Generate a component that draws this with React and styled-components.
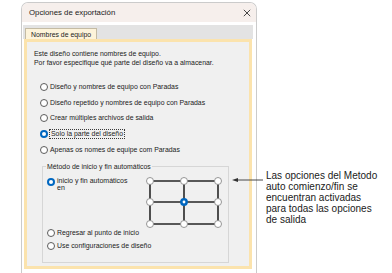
import React from "react";
import styled, { createGlobalStyle } from "styled-components";

const Global = createGlobalStyle`
  html, body { margin: 0; padding: 0; background: #ffffff; }
  body { font-family: "Liberation Sans", Arial, sans-serif; color: #1b1b1b; }
  * { box-sizing: border-box; }
`;

const Page = styled.div`
  position: relative;
  width: 392px;
  height: 273px;
  overflow: hidden;
  padding: 2px 0 0 21px;
`;

const Dialog = styled.div`
  width: 236px;
  height: 271px;
  border: 1px solid #cbcbcb;
  border-bottom: none;
  border-radius: 7px 7px 0 0;
  background: #ffffff;
  display: flex;
  flex-direction: column;
`;

const TitleBar = styled.div`
  height: 19px;
  flex-shrink: 0;
  background: #f6efec;
  border-radius: 6px 6px 0 0;
  display: flex;
  align-items: center;
  justify-content: space-between;
  padding: 0 5px 0 7px;
  font-size: 7.8px;
  color: #1b1b1b;
`;

const Body = styled.div`
  flex: 1;
  padding: 3px 3px 0 1px;
  display: flex;
  flex-direction: column;
`;

const TabStrip = styled.div`
  height: 14px;
  background: #e3e3e3;
  display: flex;
  align-items: flex-end;
  padding-left: 2px;
`;

const Tab = styled.div`
  height: 11px;
  padding: 0 5px;
  background: #fdf3da;
  border: 1px solid #c4bba4;
  border-bottom: none;
  font-size: 6.9px;
  display: flex;
  align-items: center;
  white-space: nowrap;
`;

const Panel = styled.div`
  margin-left: 1px;
  width: 228px;
  height: 230px;
  border: 3px solid #fbe3ad;
  background: #f0f0f0;
  font-size: 6.9px;
  color: #1b1b1b;
`;

const Intro = styled.div`
  padding: 6.5px 0 0 7px;
  line-height: 9px;
  white-space: nowrap;
`;

const RadioList = styled.div`
  margin-top: 12.6px;
  display: flex;
  flex-direction: column;
`;

const RadioRow = styled.div`
  height: ${(p) => p.$h || 15.7}px;
  display: flex;
  align-items: center;
  gap: 2px;
  padding-left: ${(p) => p.$indent ?? 13}px;
  white-space: nowrap;
`;

const Circle = styled.span`
  flex-shrink: 0;
  width: 8px;
  height: 8px;
  border-radius: 50%;
  background: #ffffff;
  border: ${(p) => (p.$checked ? "2.6px solid #0067c0" : "1px solid #5c5c5c")};
  margin-top: ${(p) => p.$top || 0}px;
`;

const Label = styled.span`
  line-height: 8px;
  outline: ${(p) => (p.$focus ? "1px dotted #3a3a3a" : "none")};
  padding: 0 ${(p) => (p.$focus ? 1 : 0)}px;
`;

const Group = styled.fieldset`
  margin: 5.4px 0 0 15px;
  width: 187px;
  height: 100px;
  border: 1px solid #d6d6d6;
  padding: 0 6px 0 4px;
  min-width: 0;
`;

const Legend = styled.legend`
  font-size: 6.9px;
  line-height: 8px;
  padding: 0 1px;
  margin-left: -1px;
  color: #1b1b1b;
`;

const TopRow = styled.div`
  padding-top: 6px;
  display: flex;
  justify-content: space-between;
  align-items: flex-start;
`;

const AutoOption = styled.div`
  display: flex;
  align-items: flex-start;
  gap: 2px;
`;

const AutoLabel = styled.div`
  width: 78px;
  font-size: 7px;
  line-height: 7px;
`;

const BottomRadios = styled.div`
  margin-top: -2.5px;
  display: flex;
  flex-direction: column;
`;

const Callout = styled.div`
  position: absolute;
  left: 232px;
  top: 170px;
  display: flex;
  align-items: flex-start;
  gap: 2px;
`;

const Arrow = styled.svg`
  margin-top: 5px;
  flex-shrink: 0;
`;

const CalloutText = styled.div`
  font-family: "Liberation Sans", Arial, sans-serif;
  font-size: 10px;
  line-height: 11px;
  color: #1a1a1a;
  white-space: nowrap;
`;

function Radio({ checked, children, focus, indent, h }) {
  return (
    <RadioRow $indent={indent} $h={h}>
      <Circle $checked={checked} />
      <Label $focus={focus}>{children}</Label>
    </RadioRow>
  );
}

function PositionGrid() {
  const xs = [4, 38, 72];
  const ys = [4, 25, 47];
  return (
    <svg width="76" height="52" viewBox="0 0 76 52">
      {ys.map((y) => (
        <line key={"h" + y} x1="4" y1={y} x2="72" y2={y} stroke="#262626" strokeWidth="1.6" />
      ))}
      {xs.map((x) => (
        <line key={"v" + x} x1={x} y1="4" x2={x} y2="47" stroke="#262626" strokeWidth="1.6" />
      ))}
      {ys.map((y) =>
        xs.map((x) => {
          const sel = x === 38 && y === 25;
          return sel ? (
            <g key={x + "-" + y}>
              <circle cx={x} cy={y} r="3.9" fill="#0067c0" />
              <circle cx={x} cy={y} r="1.4" fill="#ffffff" />
            </g>
          ) : (
            <circle key={x + "-" + y} cx={x} cy={y} r="3.5" fill="#ffffff" stroke="#8a8a8a" strokeWidth="0.9" />
          );
        })
      )}
    </svg>
  );
}

export default function App() {
  return (
    <Page>
      <Global />
      <Dialog>
        <TitleBar>
          <span>Opciones de exportación</span>
          <svg width="8" height="8" viewBox="0 0 8 8">
            <path d="M0.8 0.8 L7.2 7.2 M7.2 0.8 L0.8 7.2" stroke="#333" strokeWidth="0.9" fill="none" />
          </svg>
        </TitleBar>
        <Body>
          <TabStrip>
            <Tab>Nombres de equipo</Tab>
          </TabStrip>
          <Panel>
            <Intro>
              Este diseño contiene nombres de equipo.
              <br />
              Por favor especifique qué parte del diseño va a almacenar.
            </Intro>
            <RadioList>
              <Radio>Diseño y nombres de equipo con Paradas</Radio>
              <Radio>Diseño repetido y nombres de equipo con Paradas</Radio>
              <Radio>Crear múltiples archivos de salida</Radio>
              <Radio checked focus>Solo la parte del diseño</Radio>
              <Radio>Apenas os nomes de equipe com Paradas</Radio>
            </RadioList>
            <Group>
              <Legend>Método de inicio y fin automáticos</Legend>
              <TopRow>
                <AutoOption>
                  <Circle $checked $top={1.5} />
                  <AutoLabel>inicio y fin automáticos en</AutoLabel>
                </AutoOption>
                <PositionGrid />
              </TopRow>
              <BottomRadios>
                <Radio indent={0} h={13}>Regresar al punto de inicio</Radio>
                <Radio indent={0} h={13}>Use configuraciones de diseño</Radio>
              </BottomRadios>
            </Group>
          </Panel>
        </Body>
      </Dialog>
      <Callout>
        <Arrow width="32" height="10" viewBox="0 0 32 10">
          <polygon points="0,5 6,3 6,7" fill="#333" />
          <line x1="5" y1="5" x2="31" y2="5" stroke="#333" strokeWidth="0.9" />
        </Arrow>
        <CalloutText>
          Las opciones del Metodo
          <br />
          auto comienzo/fin se
          <br />
          encuentran activadas
          <br />
          para todas las opciones
          <br />
          de salida
        </CalloutText>
      </Callout>
    </Page>
  );
}
